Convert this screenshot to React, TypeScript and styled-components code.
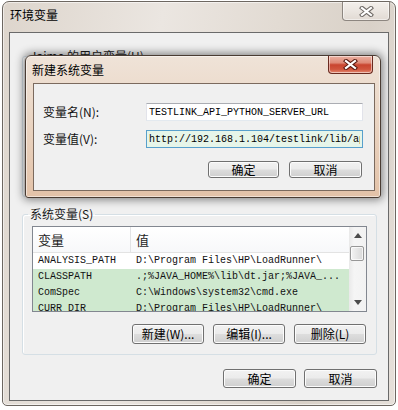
import React from "react";
import styled, { createGlobalStyle } from "styled-components";

const CJK = `"Noto Sans CJK SC", "Noto Sans", sans-serif`;
const MONO = `"Liberation Mono", "DejaVu Sans Mono", monospace`;

const GlobalStyle = createGlobalStyle`
  html, body { margin: 0; padding: 0; background: #ffffff; }
  body { font-family: ${CJK}; font-size: 12px; color: #000; }
  * { box-sizing: border-box; }
`;

const Window = styled.div`
  position: relative;
  width: 394px;
  height: 405px;
  margin: 1px 0 0 2px;
  border: 1px solid #6d6761;
  border-radius: 7px 7px 5px 5px;
  background: linear-gradient(100deg, #ddd5cc 0%, #ebe6e1 35%, #e2dbd3 60%, #d9d1c8 80%, #e6e0da 100%);
  box-shadow: inset 0 0 0 1px rgba(255, 255, 255, 0.55);
  padding: 0 6px 4px 6px;
  display: flex;
  flex-direction: column;
`;

const TitleBar = styled.div<{ $h: number }>`
  height: ${(p) => p.$h}px;
  display: flex;
  align-items: flex-start;
  flex-shrink: 0;
`;

const Title = styled.div<{ $top: number; $left: number }>`
  margin: ${(p) => p.$top}px 0 0 ${(p) => p.$left}px;
  height: 16px;
  line-height: 16px;
  font-size: 12px;
  color: #000;
  font-family: ${CJK};
`;

const CloseButton = styled.div<{ $red?: boolean; $w: number; $h: number; $right: number }>`
  margin-left: auto;
  margin-right: ${(p) => p.$right}px;
  width: ${(p) => p.$w}px;
  height: ${(p) => p.$h}px;
  border: 1px solid ${(p) => (p.$red ? "#6a2a1f" : "#8d8680")};
  border-top: none;
  border-radius: 0 0 4px 4px;
  background: ${(p) =>
    p.$red
      ? "linear-gradient(#eab0a2 0%, #df8a76 40%, #c9452f 52%, #d0553d 78%, #e48b72 100%)"
      : "linear-gradient(#f3efeb 0%, #ebe6e1 50%, #e1dad3 100%)"};
  box-shadow: inset 0 0 0 1px rgba(255, 255, 255, 0.5);
  display: flex;
  align-items: center;
  justify-content: center;
`;

const Client = styled.div`
  flex: 1;
  background: #f0f0f0;
  border: 1px solid #6a6a6a;
  padding: 15px 11px 0 12px;
  display: flex;
  flex-direction: column;
`;

const Group = styled.fieldset<{ $mt: number }>`
  margin: ${(p) => p.$mt}px 0 0 0;
  padding: 4px 9px 10px 9px;
  border: 1px solid #d5dfe5;
  border-radius: 3px;
  box-shadow: inset 1px 1px 0 #ffffff;
  min-width: 0;
`;

const Legend = styled.legend`
  margin-left: -4px;
  padding: 0 2px;
  height: 16px;
  line-height: 16px;
  font-size: 12px;
  font-family: ${CJK};
  color: #1a1a1a;
`;

/* Body of the user-variable group: entirely hidden beneath the modal dialog. */
const CoveredBody = styled.div`
  height: 118px;
`;

const ListView = styled.div`
  height: 86px;
  border: 1px solid #828790;
  background: #ffffff;
  display: flex;
  overflow: hidden;
`;

const ListBody = styled.div`
  flex: 1;
  display: flex;
  flex-direction: column;
  min-width: 0;
`;

const HeaderRow = styled.div`
  height: 26px;
  flex-shrink: 0;
  display: grid;
  grid-template-columns: 98px 1fr;
  border-bottom: 1px solid #e3e3e3;
  background: linear-gradient(#ffffff, #f7f8fa);
`;

const HeaderCell = styled.div<{ $pad: number; $sep?: boolean }>`
  padding-left: ${(p) => p.$pad}px;
  line-height: 26px;
  font-size: 13px;
  font-family: ${CJK};
  color: #1e1e1e;
  border-right: ${(p) => (p.$sep ? "1px solid #e2e3e5" : "none")};
`;

const Row = styled.div<{ $hl?: boolean }>`
  height: 16px;
  flex-shrink: 0;
  display: grid;
  grid-template-columns: 98px 1fr;
  background: ${(p) => (p.$hl ? "#cfe9cf" : "#ffffff")};
`;

const Cell = styled.div<{ $pad: number }>`
  padding-left: ${(p) => p.$pad}px;
  line-height: 16px;
  font-family: ${MONO};
  font-size: 10px;
  color: #111;
  white-space: nowrap;
  overflow: hidden;
`;

const ScrollBar = styled.div`
  width: 17px;
  flex-shrink: 0;
  background: linear-gradient(90deg, #e9e9e9, #f5f5f5 30%, #f2f2f2);
  display: flex;
  flex-direction: column;
`;

const ScrollArrow = styled.div`
  height: 17px;
  flex-shrink: 0;
  display: flex;
  align-items: center;
  justify-content: center;
`;

const Thumb = styled.div`
  margin: 2px 2px 0 1px;
  height: 15px;
  flex-shrink: 0;
  border: 1px solid #979797;
  border-radius: 2px;
  background: linear-gradient(90deg, #f4f4f4, #e6e6e6 50%, #d9d9d9);
  box-shadow: inset 0 0 0 1px rgba(255, 255, 255, 0.7);
`;

const Track = styled.div`
  flex: 1;
`;

const ButtonRow = styled.div<{ $mt: number; $gap: number; $pr: number }>`
  margin-top: ${(p) => p.$mt}px;
  padding-right: ${(p) => p.$pr}px;
  display: flex;
  justify-content: flex-end;
  gap: ${(p) => p.$gap}px;
  flex-shrink: 0;
`;

const Button = styled.div<{ $w: number; $h: number }>`
  width: ${(p) => p.$w}px;
  height: ${(p) => p.$h}px;
  border: 1px solid #707070;
  border-radius: 3px;
  background: linear-gradient(#f2f2f2 0%, #ebebeb 49%, #dddddd 51%, #cfcfcf 100%);
  box-shadow: inset 0 0 0 1px #fcfcfc;
  display: flex;
  align-items: center;
  justify-content: center;
  font-family: ${CJK};
  font-size: 12px;
  line-height: 12px;
  color: #000;
  white-space: nowrap;
`;

const Dialog = styled.div`
  position: absolute;
  left: 22px;
  top: 53px;
  width: 356px;
  height: 143px;
  border: 1px solid #4a3c33;
  border-radius: 6px 6px 3px 3px;
  background: linear-gradient(180deg, #efe3d8 0%, #ead5c3 45%, #e3c2a8 100%);
  box-shadow: 0 0 9px 2px rgba(0, 0, 0, 0.45), inset 0 0 0 1px rgba(255, 255, 255, 0.5);
  padding: 0 5px 6px 7px;
  display: flex;
  flex-direction: column;
`;

const DialogClient = styled.div`
  flex: 1;
  background: #f0f0f0;
  border: 1px solid #7b6a5e;
  padding: 19px 11px 0 9px;
  display: flex;
  flex-direction: column;
`;

const FieldRow = styled.div<{ $mb: number }>`
  display: flex;
  align-items: center;
  height: 18px;
  margin-bottom: ${(p) => p.$mb}px;
`;

const FieldLabel = styled.label`
  width: 103px;
  height: 16px;
  line-height: 16px;
  flex-shrink: 0;
  font-family: ${CJK};
  font-size: 12px;
  color: #111;
`;

const TextInput = styled.input<{ $focused?: boolean }>`
  flex: 1;
  min-width: 0;
  height: 18px;
  padding: 0 2px;
  margin: 0;
  outline: none;
  border: 1px solid ${(p) => (p.$focused ? "#58a0cc" : "#abadb3")};
  border-left-color: ${(p) => (p.$focused ? "#58a0cc" : "#e2e3ea")};
  border-right-color: ${(p) => (p.$focused ? "#58a0cc" : "#e2e3ea")};
  border-bottom-color: ${(p) => (p.$focused ? "#58a0cc" : "#e3e9ef")};
  background: ${(p) => (p.$focused ? "#e6f5e9" : "#ffffff")};
  font-family: ${MONO};
  font-size: 10px;
  line-height: 14px;
  color: #000;
`;

const CloseGlyph = ({ outline }: { outline: string }) => (
  <svg width="15" height="11" viewBox="0 0 15 11">
    <path d="M3 2 L12 9 M12 2 L3 9" stroke={outline} strokeWidth="4.2" strokeLinecap="square" fill="none" />
    <path d="M3 2 L12 9 M12 2 L3 9" stroke="#ffffff" strokeWidth="2.2" strokeLinecap="square" fill="none" />
  </svg>
);

const Arrow = ({ up }: { up?: boolean }) => (
  <svg width="8" height="5" viewBox="0 0 8 5">
    <polygon points={up ? "0,5 8,5 4,0" : "0,0 8,0 4,5"} fill="#4d4d4d" />
  </svg>
);

type VarRow = { name: string; value: string; hl?: boolean };

const systemVars: VarRow[] = [
  { name: "ANALYSIS_PATH", value: "D:\\Program Files\\HP\\LoadRunner\\" },
  { name: "CLASSPATH", value: ".;%JAVA_HOME%\\lib\\dt.jar;%JAVA_...", hl: true },
  { name: "ComSpec", value: "C:\\Windows\\system32\\cmd.exe", hl: true },
  { name: "CURR_DIR", value: "D:\\Program Files\\HP\\LoadRunner\\", hl: true },
];

const VarList = ({ rows }: { rows: VarRow[] }) => (
  <ListView>
    <ListBody>
      <HeaderRow>
        <HeaderCell $pad={5} $sep>变量</HeaderCell>
        <HeaderCell $pad={5}>值</HeaderCell>
      </HeaderRow>
      {rows.map((r) => (
        <Row key={r.name} $hl={r.hl}>
          <Cell $pad={5}>{r.name}</Cell>
          <Cell $pad={5}>{r.value}</Cell>
        </Row>
      ))}
    </ListBody>
    <ScrollBar>
      <ScrollArrow>
        <Arrow up />
      </ScrollArrow>
      <Thumb />
      <Track />
      <ScrollArrow>
        <Arrow />
      </ScrollArrow>
    </ScrollBar>
  </ListView>
);

export default function App() {
  return (
    <>
      <GlobalStyle />
      <Window>
        <TitleBar $h={30}>
          <Title $top={5} $left={1}>环境变量</Title>
          <CloseButton $w={48} $h={19} $right={-1}>
            <CloseGlyph outline="#6f6a66" />
          </CloseButton>
        </TitleBar>
        <Client>
          <Group $mt={0}>
            <Legend>Jaime 的用户变量(U)</Legend>
            <CoveredBody />
          </Group>
          <Group $mt={9}>
            <Legend>系统变量(S)</Legend>
            <VarList rows={systemVars} />
            <ButtonRow $mt={12} $gap={9} $pr={1}>
              <Button $w={72} $h={20}>新建(W)...</Button>
              <Button $w={72} $h={20}>编辑(I)...</Button>
              <Button $w={72} $h={20}>删除(L)</Button>
            </ButtonRow>
          </Group>
          <ButtonRow $mt={14} $gap={8} $pr={0}>
            <Button $w={73} $h={19}>确定</Button>
            <Button $w={73} $h={19}>取消</Button>
          </ButtonRow>
        </Client>
        <Dialog>
          <TitleBar $h={27}>
            <Title $top={6} $left={-1}>新建系统变量</Title>
            <CloseButton $red $w={45} $h={18} $right={2}>
              <CloseGlyph outline="#5a1a10" />
            </CloseButton>
          </TitleBar>
          <DialogClient>
            <FieldRow $mb={9}>
              <FieldLabel>变量名(N):</FieldLabel>
              <TextInput readOnly defaultValue="TESTLINK_API_PYTHON_SERVER_URL" />
            </FieldRow>
            <FieldRow $mb={0}>
              <FieldLabel>变量值(V):</FieldLabel>
              <TextInput $focused readOnly defaultValue="http://192.168.1.104/testlink/lib/api/xmlrpc.php" />
            </FieldRow>
            <ButtonRow $mt={13} $gap={10} $pr={1}>
              <Button $w={71} $h={17}>确定</Button>
              <Button $w={73} $h={17}>取消</Button>
            </ButtonRow>
          </DialogClient>
        </Dialog>
      </Window>
    </>
  );
}
